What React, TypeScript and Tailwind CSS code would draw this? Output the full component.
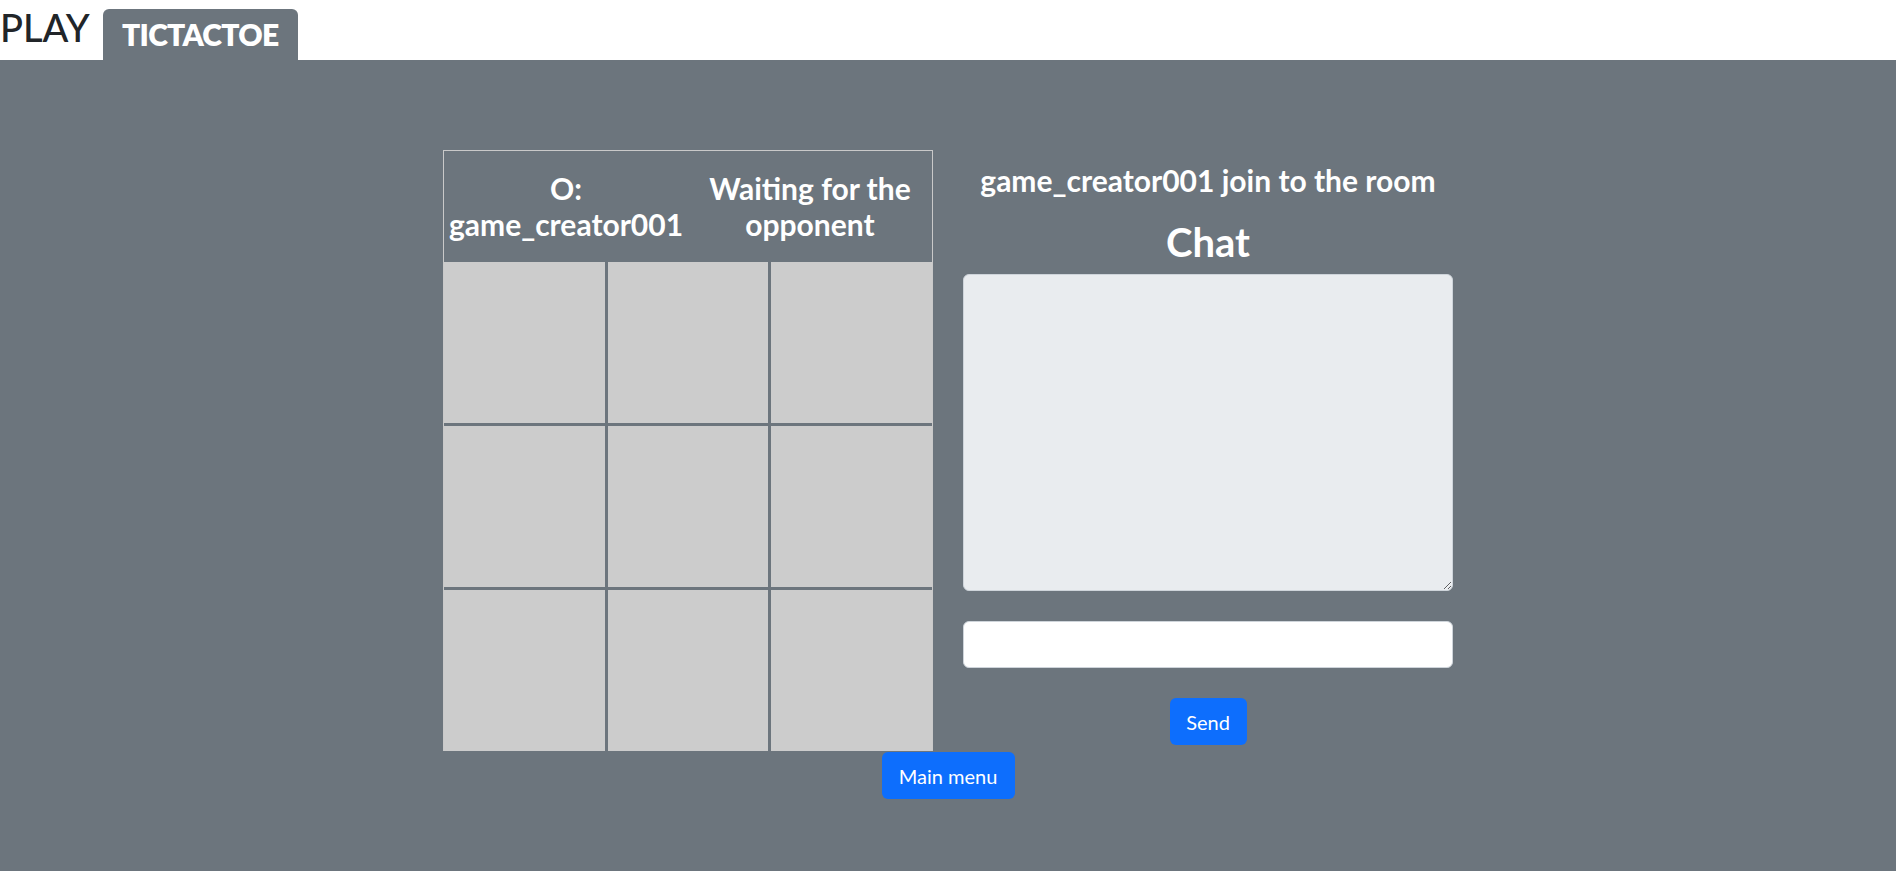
import { useState } from "react";

const font = { fontFamily: "Lato, 'Open Sans', sans-serif" };

export default function App() {
  const [board] = useState<string[]>(Array(9).fill(""));
  const [msg, setMsg] = useState("");

  return (
    <div className="min-h-screen flex flex-col bg-[#6c757d]" style={font}>
      {/* top bar */}
      <div className="h-[60px] bg-white flex items-end shrink-0">
        <span className="text-[38px] font-medium leading-none text-[#212529] mb-[14px]">PLAY</span>
        <span className="ml-[13px] h-[51px] w-[195px] rounded-t-[6px] bg-[#6c757d] text-white text-[30px] font-extrabold flex items-center justify-center tracking-tight">
          TICTACTOE
        </span>
      </div>

      <div className="flex-1 pt-[90px] flex flex-col items-center">
        <div className="flex gap-[30px]">
          {/* board */}
          <div className="w-[490px] border border-[#c9c9c9] border-b-0">
            <div className="h-[111px] grid grid-cols-2 text-white text-[30px] font-bold leading-[1.2] text-center">
              <div className="flex items-center justify-center pb-[2px]">
                <span>O:<br />game_creator001</span>
              </div>
              <div className="flex items-center justify-center pb-[2px]">
                <span>Waiting for the<br />opponent</span>
              </div>
            </div>
            <div className="grid grid-cols-3 gap-[3px]">
              {board.map((v, i) => (
                <div key={i} className="h-[161px] bg-[#cccccc] flex items-center justify-center text-6xl">
                  {v}
                </div>
              ))}
            </div>
          </div>

          {/* chat */}
          <div className="w-[490px] flex flex-col items-center">
            <h4 className="mt-[12px] text-[30px] font-bold leading-[1.2] text-white">
              game_creator001 join to the room
            </h4>
            <h2 className="mt-[20px] text-[40px] font-bold leading-[1.2] text-white">Chat</h2>
            <textarea
              readOnly
              className="mt-[8px] w-full h-[317px] bg-[#e9ecef] border border-[#ced4da] rounded-[6px] p-3 text-xl outline-none"
            />
            <input
              value={msg}
              onChange={(e) => setMsg(e.target.value)}
              className="mt-[30px] w-full h-[47px] bg-white border border-[#ced4da] rounded-[6px] px-4 text-xl outline-none"
            />
            <button className="mt-[30px] h-[47px] w-[77px] rounded-[6px] bg-[#0d6efd] text-white text-[20px]">
              Send
            </button>
          </div>
        </div>

        <button className="mt-[1px] h-[47px] w-[133px] rounded-[6px] bg-[#0d6efd] text-white text-[20px]">
          Main menu
        </button>
      </div>
    </div>
  );
}
